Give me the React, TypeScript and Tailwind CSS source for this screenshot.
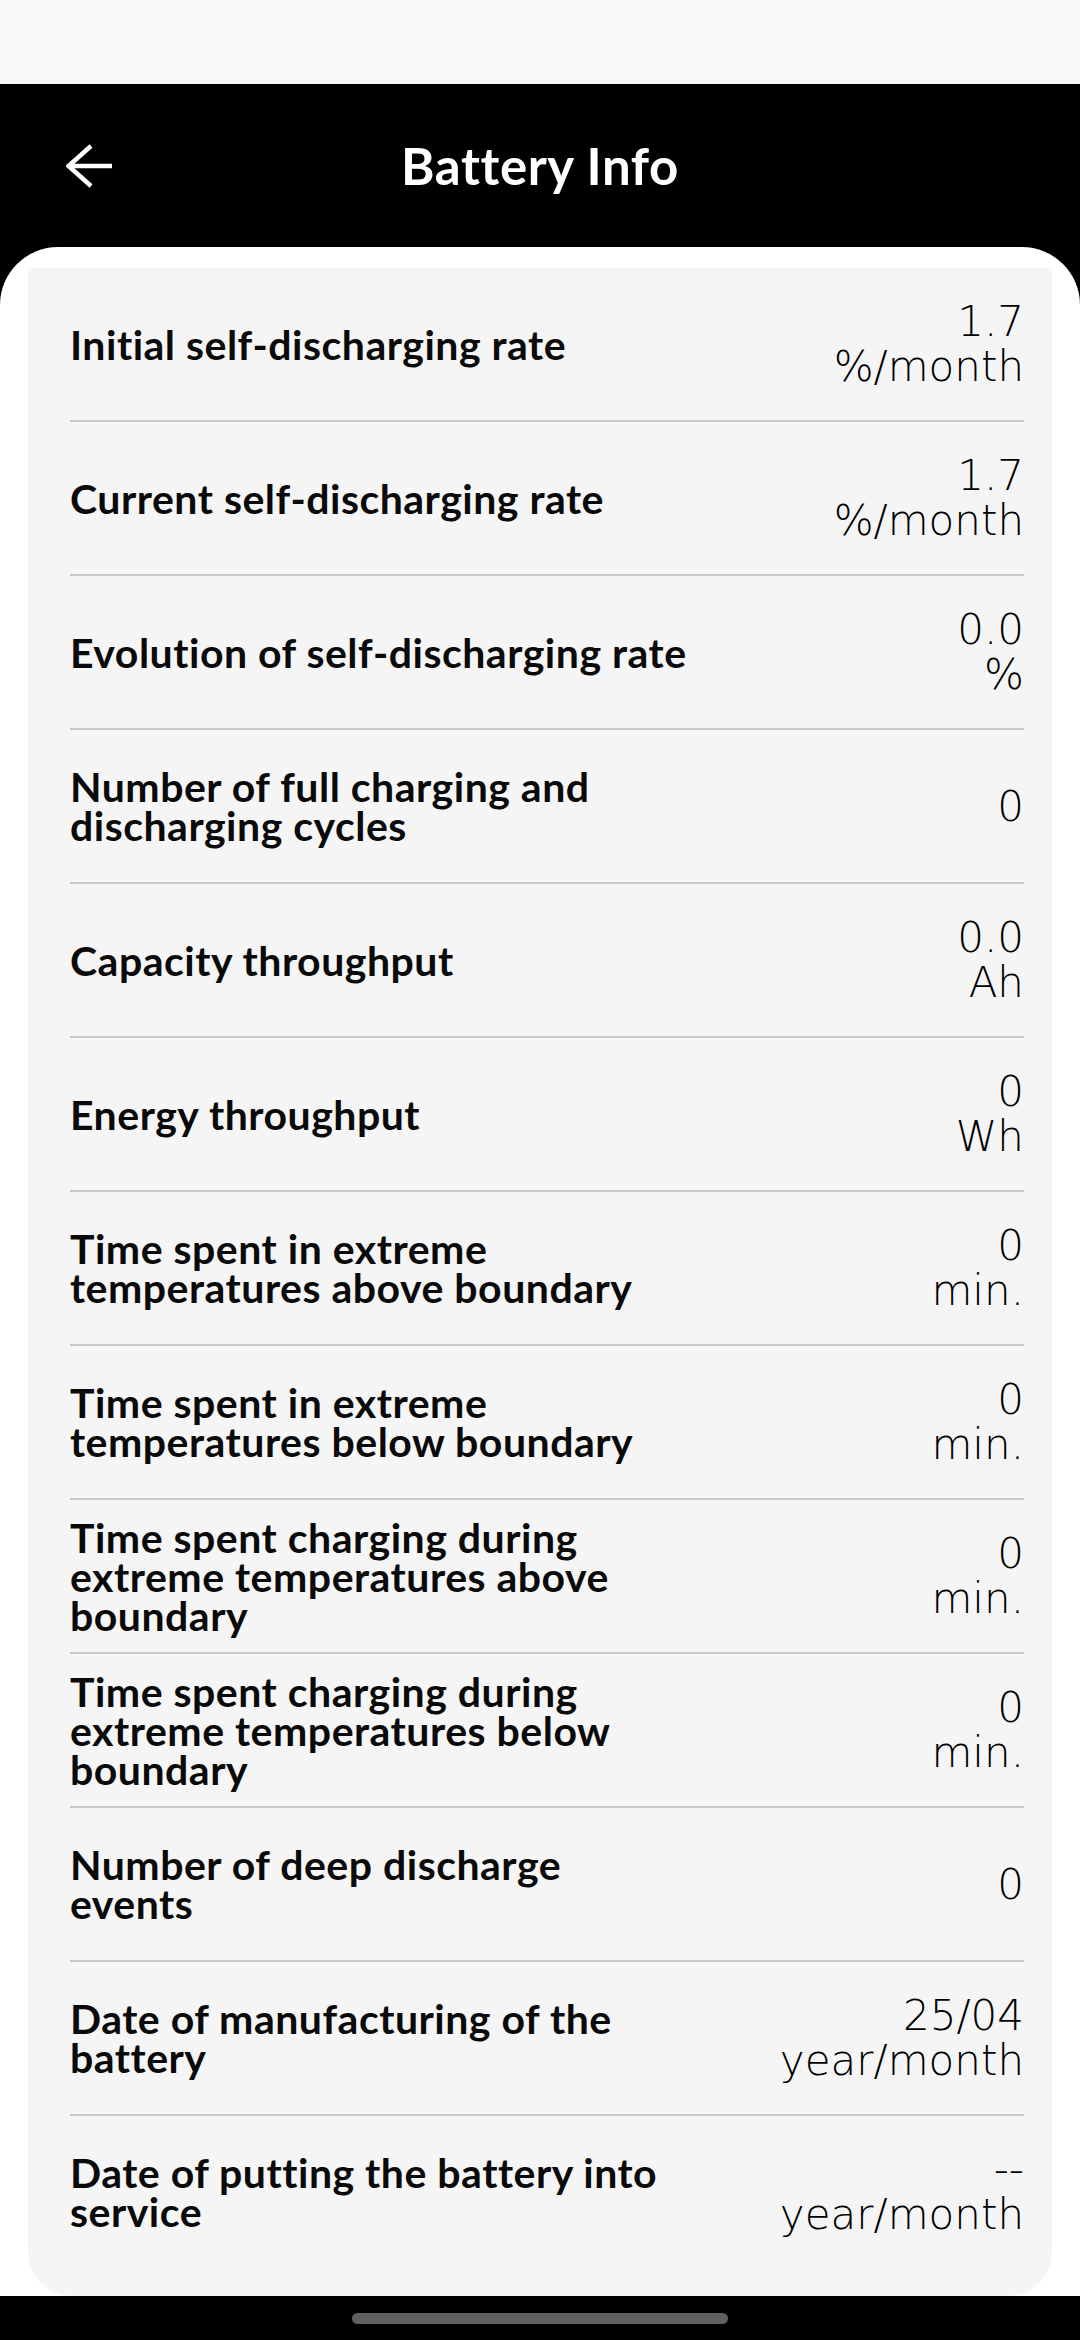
import React from "react";

type Row = { label: string[]; value: string[] };

const rows: Row[] = [
  { label: ["Initial self-discharging rate"], value: ["1.7", "%/month"] },
  { label: ["Current self-discharging rate"], value: ["1.7", "%/month"] },
  { label: ["Evolution of self-discharging rate"], value: ["0.0", "%"] },
  { label: ["Number of full charging and", "discharging cycles"], value: ["0"] },
  { label: ["Capacity throughput"], value: ["0.0", "Ah"] },
  { label: ["Energy throughput"], value: ["0", "Wh"] },
  { label: ["Time spent in extreme", "temperatures above boundary"], value: ["0", "min."] },
  { label: ["Time spent in extreme", "temperatures below boundary"], value: ["0", "min."] },
  {
    label: ["Time spent charging during", "extreme temperatures above", "boundary"],
    value: ["0", "min."],
  },
  {
    label: ["Time spent charging during", "extreme temperatures below", "boundary"],
    value: ["0", "min."],
  },
  { label: ["Number of deep discharge", "events"], value: ["0"] },
  { label: ["Date of manufacturing of the", "battery"], value: ["25/04", "year/month"] },
  { label: ["Date of putting the battery into", "service"], value: ["--", "year/month"] },
];

export default function App() {
  return (
    <div className="w-[1080px] h-[2340px] flex flex-col bg-black overflow-hidden">
      {/* status bar */}
      <div className="h-[84px] bg-[#f8f8f8] shrink-0" />

      {/* header */}
      <div className="h-[163px] shrink-0 grid grid-cols-[1fr_auto_1fr] items-center bg-black">
        <div className="pl-[66px] flex items-center">
          <svg width="48" height="48" viewBox="0 0 48 48" fill="none">
            <path
              d="M25 4 L2.5 24 L25 44 M2.5 24 H46"
              stroke="#ffffff"
              strokeWidth="4.5"
              strokeLinejoin="miter"
              strokeLinecap="butt"
            />
          </svg>
        </div>
        <div
          className="text-white text-[51px] font-bold leading-none tracking-[0.6px]"
          style={{ fontFamily: "Lato, 'Noto Sans', sans-serif" }}
        >
          Battery Info
        </div>
        <div />
      </div>

      {/* content panel */}
      <div className="shrink-0 bg-white rounded-t-[58px] pt-[21px] px-[28px] flex flex-col">
        <div className="bg-[#f5f5f5] rounded-b-[44px] pl-[42px] pr-[28px] pb-[28px]">
          {rows.map((r, i) => (
            <div
              key={i}
              className={
                "flex items-center justify-between " +
                (i < rows.length - 1 ? "h-[154px] border-b-2 border-[#c8c8c8]" : "h-[152px]")
              }
            >
              <div
                className="text-[41px] font-bold leading-[39px] text-[#0a0a0a] tracking-[0.5px]"
                style={{ fontFamily: "Lato, 'Noto Sans', sans-serif" }}
              >
                {r.label.map((l, j) => (
                  <div key={j} className="whitespace-nowrap">
                    {l}
                  </div>
                ))}
              </div>
              <div
                className="text-right text-[42px] font-extralight leading-[45px] text-[#000000]"
                style={{ fontFamily: "'DejaVu Sans', sans-serif" }}
              >
                {r.value.map((v, j) => (
                  <div key={j} className="whitespace-nowrap">
                    {v}
                  </div>
                ))}
              </div>
            </div>
          ))}
        </div>
      </div>

      {/* navigation bar */}
      <div className="flex-1 bg-black flex items-center justify-center">
        <div className="w-[376px] h-[11px] rounded-full bg-[#606060]" />
      </div>
    </div>
  );
}
